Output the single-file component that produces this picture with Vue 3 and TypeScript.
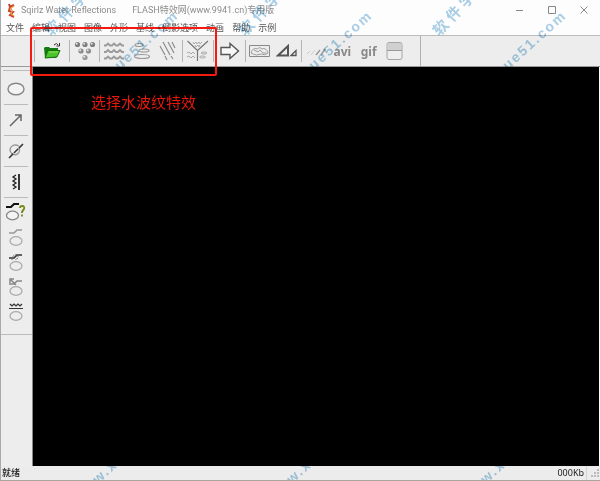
<script setup lang="ts">
interface Mark {
  text: string
  x: number
  y: number
  kind: string
}

const menus: string[] = ['文件', '编辑', '视图', '图像', '外形', '基线', '倒影选项', '动画', '帮助', '示例']

const marks: Mark[] = [0, 194, 388].flatMap((dx: number): Mark[] => [
  { text: '软件学', x: 52 + dx, y: 38, kind: 'brand' },
  { text: 'ue51.com', x: 120 + dx, y: 73, kind: 'site' },
  { text: 'w.x', x: 98 + dx, y: 487, kind: 'tail' },
])
</script>

<template>
  <div class="window">
    <header class="titlebar">
      <svg class="logo" width="9" height="15" viewBox="0 0 9 15">
        <path d="M2 1l1 3 4-2M3 4l-1 4 4 1-3 3 4 2" fill="none" stroke="#c9402c" stroke-width="2" />
        <path d="M7 3L4 5l1 3-1 3 3 2" fill="none" stroke="#e9a13b" stroke-width="1.200" />
      </svg>
      <h1 class="title"><span>Sqirlz Water Reflections</span><span>FLASH特效网(www.9941.cn)专用版</span></h1>
      <div class="controls">
        <button aria-label="最小化"><svg width="8" height="8" viewBox="0 0 8 8"><path d="M0 4.500h7" /></svg></button>
        <button aria-label="最大化"><svg width="8" height="8" viewBox="0 0 8 8"><path d="M.5.5h7v7h-7z" /></svg></button>
        <button aria-label="关闭"><svg width="8" height="8" viewBox="0 0 8 8"><path d="M.5.5l7 7M7.500.5l-7 7" /></svg></button>
      </div>
    </header>

    <nav class="menubar">
      <button v-for="m in menus" :key="m">{{ m }}</button>
    </nav>

    <div class="toolbar">
      <div class="group open">
        <button aria-label="打开">
          <svg width="20" height="20" viewBox="0 0 20 20">
            <path d="M2 7l1-1h4l1 1h8v3l-2 7H3z" fill="#167a12" />
            <path d="M3 17L6 9.500h12L15 16z" fill="#4cc52b" stroke="#15700f" />
            <path d="M7 11h9" stroke="#8be45c" />
            <path d="M12 4q3-3 4 0M17.500 2v3h-3" fill="none" stroke="#333" />
          </svg>
        </button>
      </div>
      <div class="group drops">
        <button aria-label="水滴">
          <svg width="22" height="20" viewBox="0 0 22 20">
            <g fill="#7d7d7d">
              <circle cx="3.500" cy="3.500" r="2.600" /><circle cx="11" cy="3.500" r="2.600" /><circle cx="18.500" cy="3.500" r="2.600" />
              <circle cx="7" cy="10" r="2.600" fill="#8c8c8c" /><circle cx="14.500" cy="10" r="2.600" fill="#8c8c8c" /><circle cx="11" cy="16.500" r="2.600" fill="#999" />
            </g>
            <g fill="#e4e4e4">
              <circle cx="2.700" cy="2.700" r="1" /><circle cx="10.200" cy="2.700" r="1" /><circle cx="17.700" cy="2.700" r="1" />
              <circle cx="6.200" cy="9.200" r="1" /><circle cx="13.700" cy="9.200" r="1" /><circle cx="10.200" cy="15.700" r="1" />
            </g>
          </svg>
        </button>
      </div>
      <div class="group waves">
        <button aria-label="波浪">
          <svg width="22" height="22" viewBox="0 0 22 22" fill="none" stroke="#9a9a9a" stroke-width="1.800">
            <path d="M1 5.500h2l2-2 2 2h2l2-2 2 2h2l2-2 2 2h2" />
            <path d="M1 12h2l2-2 2 2h2l2-2 2 2h2l2-2 2 2h2" />
            <path d="M1 18.500h2l2-2 2 2h2l2-2 2 2h2l2-2 2 2h2" />
          </svg>
        </button>
        <button aria-label="涟漪">
          <svg width="20" height="18" viewBox="0 0 20 18" fill="none" stroke="#999" stroke-width="1.200">
            <ellipse cx="8" cy="3" rx="4" ry="1.500" /><ellipse cx="13" cy="8.500" rx="5" ry="1.500" /><ellipse cx="11" cy="14.500" rx="7.500" ry="2" />
          </svg>
        </button>
        <button aria-label="雨">
          <svg width="18" height="20" viewBox="0 0 18 20" fill="none" stroke="#8c8c8c" stroke-width="1.200">
            <path d="M1 5l5 9M4 1l7 13M9 1l6 11M13 1l3 6M6 15l2 4M12 15l2 3" />
          </svg>
        </button>
      </div>
      <div class="group split">
        <button aria-label="组合">
          <svg width="24" height="22" viewBox="0 0 24 22" fill="none" stroke="#aaa">
            <path d="M1.500 1l10 9.500v10.500M22 1L11.500 10.500" stroke="#777" stroke-width="1.200" />
            <path d="M7 2l1 2 2-2 1 2 2-2 1 2 2-2M9 5l1 2 2-2 1 2 1-2M1 13l2-1 2 2 2-2 2 2M1 17l2-1 2 2 2-2 2 2" />
            <ellipse cx="18" cy="13" rx="3" ry="1" /><ellipse cx="16.500" cy="17" rx="3" ry="1" />
          </svg>
        </button>
      </div>
      <div class="group next">
        <button aria-label="下一步">
          <svg width="20" height="18" viewBox="0 0 20 18"><path d="M1 5.500h9V1.500L18.500 9 10 16.500v-4H1z" fill="#f8f8f8" stroke="#555" stroke-width="1.400" /></svg>
        </button>
      </div>
      <div class="group image">
        <button aria-label="图片">
          <svg width="22" height="14" viewBox="0 0 22 14" fill="none" stroke="#888">
            <path d="M.5 1.500h20v11H.5z" />
            <path d="M2 9q2-6 6-4 3-3 5 0 4-2 6 4-3 3-7 1-5 2-8 0zM5 6l4 2 2-2 3 3 3 0" stroke-width=".8" />
          </svg>
        </button>
        <button aria-label="缩放">
          <svg width="22" height="14" viewBox="0 0 22 14" fill="none" stroke="#555">
            <path d="M2 11.500L12 2v9.500z" stroke-width="2" /><path d="M15 11.500l5-5v5z" stroke-width="1.300" />
          </svg>
        </button>
      </div>
      <div class="group export">
        <button aria-label="动态">
          <svg width="20" height="12" viewBox="0 0 20 12" fill="none">
            <path d="M1 9l3-3M5 10l4-5" stroke="#ccc" /><path d="M10 10l4-5M15 10l4-6" stroke="#999" stroke-width="1.500" />
          </svg>
        </button>
        <button class="format">avi</button>
        <button class="format">gif</button>
        <button aria-label="面板">
          <svg width="18" height="20" viewBox="0 0 18 20">
            <rect x="1" y="1.500" width="15" height="17" rx="2" fill="#eee" stroke="#a5a5a5" /><path d="M2 2h13v7H2z" fill="#d0d0d0" /><path d="M1 9.500h15" stroke="#999" />
          </svg>
        </button>
      </div>
    </div>

    <main class="workspace">
      <aside class="sidebar">
        <div class="grip"></div>
        <button class="shape" aria-label="椭圆">
          <svg width="20" height="16" viewBox="0 0 20 16"><ellipse cx="10" cy="8" rx="8" ry="5.800" fill="#f3f3f3" stroke="#888" stroke-width="1.400" /></svg>
        </button>
        <button class="shape" aria-label="箭头">
          <svg width="16" height="16" viewBox="0 0 16 16"><path d="M2 14L13 3M7 3h6v6" fill="none" stroke="#666" stroke-width="1.500" /></svg>
        </button>
        <button class="shape" aria-label="切割">
          <svg width="18" height="18" viewBox="0 0 18 18" fill="none"><path d="M5 12C0 6 6 1 12 4M12 6c2 5-3 8-6 6h-2" stroke="#999" stroke-width="1.300" /><path d="M2 16L16 2" stroke="#333" stroke-width="1.500" stroke-dasharray="6 1" /></svg>
        </button>
        <button class="shape" aria-label="边缘">
          <svg width="12" height="18" viewBox="0 0 12 18" fill="none" stroke="#222"><path d="M9 1v16" stroke-width="1.800" /><path d="M6 2L3 4l3 2-3 2 3 2-3 2 3 2-3 2" stroke-width="1.300" /></svg>
        </button>
        <button class="link help" aria-label="基线帮助">
          <svg width="22" height="20" viewBox="0 0 22 20" fill="none">
            <path d="M1 6h5l3-3h5" stroke="#111" stroke-width="2" /><ellipse cx="7.500" cy="14.500" rx="6" ry="4.300" fill="#f4f4f4" stroke="#888" stroke-width="1.300" />
            <path d="M15 7q0-2 2-2 3 0 2 3-2 2-2 4M17 13.500v2" stroke="#7a861a" stroke-width="1.800" />
          </svg>
        </button>
        <button class="link" aria-label="基线">
          <svg width="16" height="20" viewBox="0 0 16 20" fill="none"><path d="M1 6h5l3-3h5" stroke="#999" stroke-width="1.500" /><ellipse cx="8" cy="14" rx="6" ry="4.300" stroke="#aaa" stroke-width="1.200" /></svg>
        </button>
        <button class="link" aria-label="曲线">
          <svg width="16" height="20" viewBox="0 0 16 20" fill="none"><path d="M1 6h5l3-3h5" stroke="#333" stroke-width="1.600" /><path d="M4 8q0-6 6-5v3l-3 2" stroke="#666" stroke-dasharray="2 1" /><ellipse cx="8" cy="14" rx="6" ry="4.300" stroke="#aaa" stroke-width="1.200" /></svg>
        </button>
        <button class="link" aria-label="移动基线">
          <svg width="16" height="20" viewBox="0 0 16 20" fill="none"><path d="M1 7h5l3-3h5M8 8L2 2M2 6V2h4" stroke="#888" stroke-width="1.500" /><ellipse cx="8" cy="14" rx="6" ry="4.300" stroke="#aaa" stroke-width="1.200" /></svg>
        </button>
        <button class="link" aria-label="波浪基线">
          <svg width="16" height="20" viewBox="0 0 16 20" fill="none"><path d="M2 2l2 2 2-2 2 2 2-2 2 2 2-2M1 6.500h14" stroke="#333" stroke-width="1.200" /><ellipse cx="8" cy="14" rx="6" ry="4.300" stroke="#aaa" stroke-width="1.200" /></svg>
        </button>
      </aside>
      <section class="canvas"><p>选择水波纹特效</p></section>
    </main>

    <footer class="status">
      <span class="state">就绪</span>
      <span class="size">000Kb</span>
      <svg width="8" height="8" viewBox="0 0 8 8" fill="#bbb"><path d="M6 0h2v2H6zM3 3h2v2H3zM6 3h2v2H6zM0 6h2v2H0zM3 6h2v2H3zM6 6h2v2H6z" /></svg>
    </footer>

    <div class="highlight"></div>
    <span
      v-for="(m, i) in marks"
      :key="i"
      class="mark"
      :class="m.kind"
      :style="{ left: m.x + 'px', top: m.y + 'px' }"
      aria-hidden="true"
    >{{ m.text }}</span>
  </div>
</template>

<style>
body {
  margin: 0;
  background: #fff;
}
</style>

<style scoped>
.window {
  position: relative;
  box-sizing: border-box;
  height: 100vh;
  overflow: hidden;
  display: flex;
  flex-direction: column;
  border-left: 1px solid #a5aab0;
  border-bottom: 1px solid #aaa59c;
  background: #fdfdfd;
  font-family: "Noto Sans", "Noto Sans CJK SC", sans-serif;
  font-size: 9px;
  color: #555;
}
button {
  display: flex;
  align-items: center;
  justify-content: center;
  padding: 0;
  border: 0;
  background: none;
  color: inherit;
  font: inherit;
}
svg {
  display: block;
}
.titlebar {
  flex: none;
  display: flex;
  align-items: center;
  height: 20px;
  padding-left: 6px;
}
.title {
  flex: 1;
  display: flex;
  gap: 16px;
  margin: 0;
  padding-left: 5px;
  font-family: Roboto, "Noto Sans CJK SC", sans-serif;
  font-size: 9px;
  line-height: 20px;
  font-weight: 400;
  color: #8c8c8c;
  white-space: nowrap;
}
.controls {
  display: flex;
}
.controls button {
  width: 32px;
  height: 20px;
}
.controls path {
  fill: none;
  stroke: #888;
}
.menubar {
  flex: none;
  display: flex;
  gap: 8px;
  height: 15px;
  padding-left: 5px;
  line-height: 15px;
}
.toolbar {
  flex: none;
  display: flex;
  align-items: center;
  box-sizing: border-box;
  height: 32px;
  padding-left: 33px;
  border-top: 1px solid #bbb;
  border-bottom: 1px solid #999;
  background: #ededed;
}
.group {
  box-sizing: border-box;
  display: flex;
  height: 22px;
  border-left: 1px solid #b5b5b5;
}
.group button {
  flex: 1;
}
.open {
  width: 35px;
}
.drops {
  width: 30px;
}
.waves {
  width: 83px;
}
.split {
  width: 31px;
}
.next {
  width: 32px;
}
.image {
  width: 56px;
}
.export {
  width: 120px;
  height: 30px;
  padding-left: 2px;
  padding-right: 12px;
  border-right: 1px solid #b0b0b0;
  border-left: 0;
  background: linear-gradient(#b5b5b5, #b5b5b5) left center / 1px 22px no-repeat;
}
.format {
  font-size: 12px;
  font-weight: 700;
  color: #888;
}
.workspace {
  flex: 1;
  min-height: 0;
  display: flex;
}
.sidebar {
  flex: none;
  box-sizing: border-box;
  width: 31px;
  background: linear-gradient(#bbb, #bbb) left 267px / 100% 1px no-repeat #ededed;
}
.grip {
  box-sizing: border-box;
  height: 7px;
  padding-top: 3px;
}
.grip::before {
  content: "";
  display: block;
  height: 1px;
  margin: 0 2px;
  background: #bbb;
}
.shape {
  box-sizing: border-box;
  width: 24px;
  height: 30px;
  margin: 0 0 1px 3px;
  box-shadow: 0 1px #bbb;
}
.link {
  width: 29px;
  height: 25px;
}
.help {
  height: 26px;
}
.canvas {
  flex: 1;
  box-sizing: border-box;
  padding: 24px 58px;
  margin-right: 1px;
  border-left: 1px solid #888;
  background: #000;
}
.canvas p {
  margin: 0;
  font-size: 15px;
  line-height: 22px;
  color: #e8170c;
  white-space: nowrap;
}
.status {
  flex: none;
  display: flex;
  align-items: center;
  height: 14px;
  padding: 0 1px;
  background: #ececec;
  font-size: 9px;
  line-height: 14px;
  color: #222;
}
.state {
  flex: 1;
  font-weight: 500;
}
.size {
  padding-right: 2px;
  margin-right: 4px;
  border-right: 1px solid #d4d4d4;
}
.highlight {
  position: absolute;
  left: 29px;
  top: 27px;
  box-sizing: border-box;
  width: 187px;
  height: 49px;
  border: 2px solid #f5190f;
  border-radius: 2px;
}
.mark {
  position: absolute;
  margin-top: -15px;
  line-height: 1;
  font-weight: 700;
  white-space: nowrap;
  color: #a9cfe6;
  mix-blend-mode: multiply;
  pointer-events: none;
  transform-origin: left bottom;
  transform: rotate(-42deg);
}
.brand {
  font-size: 15px;
  letter-spacing: 4px;
  transform: rotate(-47deg);
}
.site,
.tail {
  font-family: "Liberation Sans", sans-serif;
  font-size: 14px;
  letter-spacing: 2px;
}
</style>
